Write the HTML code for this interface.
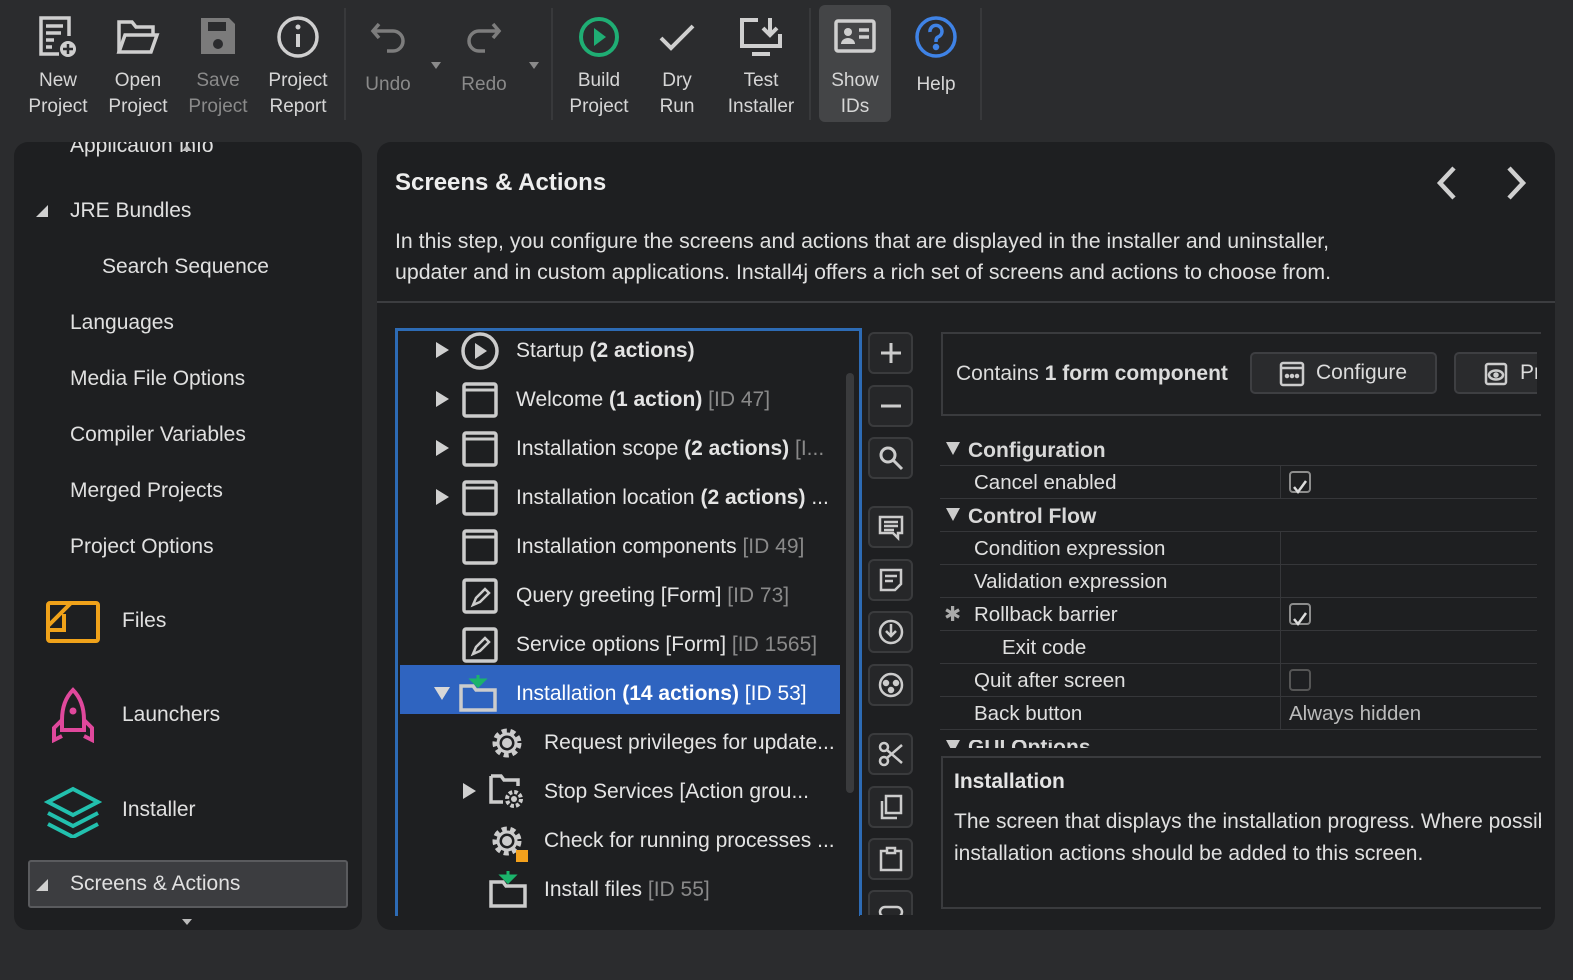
<!DOCTYPE html>
<html><head><meta charset="utf-8"><style>
*{box-sizing:border-box;margin:0;padding:0}
body{width:1573px;height:980px;background:#2b2c2e;font-family:"Liberation Sans",sans-serif;color:#dcdcdc;position:relative;overflow:hidden}
.abs{position:absolute}
.tb{position:absolute;top:0;height:122px;text-align:center;font-size:19px;line-height:26px;color:#d6d6d6}
.tb svg{display:block;margin:14px auto 8px}
.sep{position:absolute;top:8px;width:2px;height:112px;background:#38393b}
.side{left:14px;top:142px;width:348px;height:788px;background:#1e1f21;border-radius:14px;overflow:hidden}
.si{position:absolute;font-size:21px;color:#e0e0e0}
.main{left:377px;top:142px;width:1178px;height:788px;background:#1e1f21;border-radius:14px;overflow:hidden}
.tree{left:395px;top:328px;width:467px;height:588px;border:3px solid #2d6bb5;border-bottom:none;overflow:hidden}
.row{position:absolute;left:0;height:49px;width:440px;font-size:21px;line-height:49px;white-space:nowrap;color:#e4e4e4}
.row b{font-weight:bold}
.row .g{color:#8a8a8a}
.tri{position:absolute;width:0;height:0;border-top:8px solid transparent;border-bottom:8px solid transparent;border-left:13px solid #d0d0d0}
.btn{position:absolute;left:868px;width:45px;height:42px;border:2px solid #3a3b3d;border-radius:6px;background:#262729}
.btn svg{position:absolute;left:7px;top:5px}
.pr{position:absolute;left:940px;width:597px;height:33px;border-bottom:1px solid #36373a;font-size:20.5px;line-height:33px;color:#e0e0e0}
.pr .v{position:absolute;left:340px;top:0;height:33px;border-left:1px solid #36373a;width:257px;padding-left:8px;color:#cfcfcf}
.cb{position:absolute;left:8px;top:5px;width:22px;height:22px;border:2px solid #8d8d8d;border-radius:4px}
.hd{font-weight:bold;color:#d8d8d8}
</style></head><body>
<!-- toolbar -->
<div class="tb" style="left:22px;width:72px"><svg width="46" height="46" viewBox="0 0 46 46" fill="none" stroke="#cfcfcf" stroke-width="3.5"><path d="M24 40H6V4h28v18"/><path d="M11 12h17M11 19h15M11 26h8M11 33h6"/><circle cx="33" cy="35" r="8" fill="#cfcfcf" stroke="none"/><path d="M33 30v10M28 35h10" stroke="#2b2c2e" stroke-width="2.5"/></svg>New<br>Project</div>
<div class="tb" style="left:102px;width:72px"><svg width="46" height="46" viewBox="0 0 46 46" fill="none" stroke="#cfcfcf" stroke-width="3.5"><path d="M4 38V8h13l4 5h17v8"/><path d="M4 38l6-17h32l-6 17z"/></svg>Open<br>Project</div>
<div class="tb" style="left:182px;width:72px;color:#8a8a8a"><svg width="46" height="46" viewBox="0 0 46 46"><path d="M6 4h28l6 6v30H6z" fill="#7b7b7b"/><rect x="13" y="8" width="18" height="9" fill="#2b2c2e"/><circle cx="23" cy="30" r="5" fill="#2b2c2e"/></svg>Save<br>Project</div>
<div class="tb" style="left:262px;width:72px"><svg width="46" height="46" viewBox="0 0 46 46" fill="none" stroke="#cfcfcf" stroke-width="3.5"><circle cx="23" cy="23" r="19"/><path d="M23 20v13" stroke-width="4"/><circle cx="23" cy="13" r="2.5" fill="#cfcfcf" stroke="none"/></svg>Project<br>Report</div>
<div class="sep" style="left:344px"></div>
<div class="tb" style="left:355px;width:66px;color:#8a8a8a"><svg width="46" height="46" viewBox="0 0 46 46" fill="none" stroke="#7d7d7d" stroke-width="3.5"><path d="M14 10l-6 7 6 7"/><path d="M8 17h20a10 10 0 0 1 0 20h-6"/></svg><div style="margin-top:12px">Undo</div></div>
<div class="abs" style="left:431px;top:62px;border-left:5px solid transparent;border-right:5px solid transparent;border-top:7px solid #8a8a8a"></div>
<div class="tb" style="left:451px;width:66px;color:#8a8a8a"><svg width="46" height="46" viewBox="0 0 46 46" fill="none" stroke="#7d7d7d" stroke-width="3.5"><path d="M32 10l6 7-6 7"/><path d="M38 17H18a10 10 0 0 0 0 20h6"/></svg><div style="margin-top:12px">Redo</div></div>
<div class="abs" style="left:529px;top:62px;border-left:5px solid transparent;border-right:5px solid transparent;border-top:7px solid #8a8a8a"></div>
<div class="sep" style="left:551px"></div>
<div class="tb" style="left:563px;width:72px"><svg width="46" height="46" viewBox="0 0 46 46"><circle cx="23" cy="23" r="18" fill="none" stroke="#1fae74" stroke-width="4"/><path d="M18 14l12 9-12 9z" fill="#1fae74"/></svg>Build<br>Project</div>
<div class="tb" style="left:645px;width:64px"><svg width="46" height="46" viewBox="0 0 46 46" fill="none" stroke="#cfcfcf" stroke-width="4"><path d="M7 24l10 10 22-22"/></svg>Dry<br>Run</div>
<div class="tb" style="left:722px;width:78px"><svg width="46" height="46" viewBox="0 0 46 46" fill="none" stroke="#cfcfcf" stroke-width="4"><path d="M20 6H4v26h38V20"/><path d="M14 40h18"/><path d="M32 4v16M25 14l7 7 7-7"/></svg>Test<br>Installer</div>
<div class="sep" style="left:809px"></div>
<div class="abs" style="left:819px;top:5px;width:72px;height:117px;background:#444547;border-radius:6px"></div>
<div class="tb" style="left:819px;width:72px"><svg width="46" height="46" viewBox="0 0 46 46"><rect x="4" y="7" width="38" height="30" rx="2" fill="none" stroke="#cfcfcf" stroke-width="3.5"/><circle cx="16" cy="18" r="4" fill="#cfcfcf"/><path d="M9 30a7 6 0 0 1 14 0z" fill="#cfcfcf"/><path d="M27 16h10M27 23h10" stroke="#cfcfcf" stroke-width="3.5"/></svg>Show<br>IDs</div>
<div class="tb" style="left:900px;width:72px"><svg width="46" height="46" viewBox="0 0 46 46" fill="none" stroke="#3f83e6" stroke-width="3.5"><circle cx="23" cy="23" r="19"/><path d="M17 18a6 6 0 1 1 8 5c-2 1-2 3-2 5"/><circle cx="23" cy="33" r="1.5" fill="#3f83e6"/></svg><div style="margin-top:12px">Help</div></div>
<div class="sep" style="left:980px"></div>

<!-- sidebar -->
<div class="abs side">
<div class="si" style="left:56px;top:-8px">Application Info</div>
<div class="abs" style="left:168px;top:3px;border-left:5px solid transparent;border-right:5px solid transparent;border-bottom:6px solid #bbb"></div>
<div class="abs" style="left:22px;top:63px;border-left:12px solid transparent;border-bottom:12px solid #d0d0d0"></div>
<div class="si" style="left:56px;top:57px">JRE Bundles</div>
<div class="si" style="left:88px;top:113px">Search Sequence</div>
<div class="si" style="left:56px;top:169px">Languages</div>
<div class="si" style="left:56px;top:225px">Media File Options</div>
<div class="si" style="left:56px;top:281px">Compiler Variables</div>
<div class="si" style="left:56px;top:337px">Merged Projects</div>
<div class="si" style="left:56px;top:393px">Project Options</div>
<svg class="abs" style="left:32px;top:456px" width="56" height="46" viewBox="0 0 56 46" fill="none" stroke="#f0a21a" stroke-width="4"><rect x="2" y="5" width="50" height="38" rx="2"/><path d="M2 32h16V16M2 28L25 5"/></svg>
<div class="si" style="left:108px;top:467px">Files</div>
<svg class="abs" style="left:36px;top:545px" width="46" height="56" viewBox="0 0 46 56" fill="none" stroke="#e0489c" stroke-width="4"><path d="M23 3c-8 8-11 18-11 30v10h22V33C34 21 31 11 23 3z"/><path d="M12 33l-8 8v12l8-4M34 33l8 8v12l-8-4"/><circle cx="23" cy="24" r="3.5" fill="#e0489c" stroke="none"/></svg>
<div class="si" style="left:108px;top:561px">Launchers</div>
<svg class="abs" style="left:30px;top:644px" width="58" height="52" viewBox="0 0 58 52" fill="none" stroke="#22c0ae" stroke-width="4"><path d="M29 3L54 16 29 29 4 16z"/><path d="M4 27l25 13 25-13M4 38l25 13 25-13"/></svg>
<div class="si" style="left:108px;top:656px">Installer</div>
<div class="abs" style="left:14px;top:718px;width:320px;height:48px;background:#3c3d40;border:2px solid #5a5b5e;border-radius:3px"></div>
<div class="abs" style="left:22px;top:737px;border-left:12px solid transparent;border-bottom:12px solid #d0d0d0"></div>
<div class="si" style="left:56px;top:730px">Screens &amp; Actions</div>
<div class="abs" style="left:168px;top:777px;border-left:5px solid transparent;border-right:5px solid transparent;border-top:6px solid #bbb"></div>
</div>

<!-- main -->
<div class="abs main">
<div class="abs" style="left:18px;top:27px;font-size:24px;font-weight:bold;color:#eee">Screens &amp; Actions</div>
<svg class="abs" style="left:1055px;top:22px" width="30" height="40" viewBox="0 0 30 40" fill="none" stroke="#d0d0d0" stroke-width="4.5"><path d="M22 4L8 19l14 15"/></svg>
<svg class="abs" style="left:1124px;top:22px" width="30" height="40" viewBox="0 0 30 40" fill="none" stroke="#d0d0d0" stroke-width="4.5"><path d="M8 4l14 15L8 34"/></svg>
<div class="abs" style="left:18px;top:84px;font-size:21.3px;line-height:31px;color:#e0e0e0;white-space:nowrap">In this step, you configure the screens and actions that are displayed in the installer and uninstaller,<br>updater and in custom applications. Install4j offers a rich set of screens and actions to choose from.</div>
<div class="abs" style="left:0;top:159px;width:1178px;height:2px;background:#3c3d40"></div>
</div>

<!-- tree -->
<div class="abs tree">
<div class="abs" style="left:2px;top:334px;width:440px;height:49px;background:#2f64c0"></div>
<div class="abs" style="left:448px;top:42px;width:8px;height:420px;background:#3a3b3d;border-radius:4px"></div>
<div class="row" style="top:-5px"><span class="tri" style="left:38px;top:16px"></span><svg class="abs" style="left:62px;top:5px" width="40" height="40" viewBox="0 0 40 40"><circle cx="20" cy="20" r="17" fill="none" stroke="#ccc" stroke-width="3.5"/><path d="M15 12l12 8-12 8z" fill="#ccc"/></svg><span style="position:absolute;left:118px">Startup <b>(2 actions)</b></span></div>
<div class="row" style="top:44px"><span class="tri" style="left:38px;top:16px"></span><svg class="abs" style="left:64px;top:7px" width="36" height="36"><rect x="2" y="2" width="32" height="32" rx="2" fill="none" stroke="#ccc" stroke-width="3.5"/><path d="M2 8h32" stroke="#ccc" stroke-width="3"/></svg><span style="position:absolute;left:118px">Welcome <b>(1 action)</b> <span class="g">[ID 47]</span></span></div>
<div class="row" style="top:93px"><span class="tri" style="left:38px;top:16px"></span><svg class="abs" style="left:64px;top:7px" width="36" height="36"><rect x="2" y="2" width="32" height="32" rx="2" fill="none" stroke="#ccc" stroke-width="3.5"/><path d="M2 8h32" stroke="#ccc" stroke-width="3"/></svg><span style="position:absolute;left:118px">Installation scope <b>(2 actions)</b> <span class="g">[I...</span></span></div>
<div class="row" style="top:142px"><span class="tri" style="left:38px;top:16px"></span><svg class="abs" style="left:64px;top:7px" width="36" height="36"><rect x="2" y="2" width="32" height="32" rx="2" fill="none" stroke="#ccc" stroke-width="3.5"/><path d="M2 8h32" stroke="#ccc" stroke-width="3"/></svg><span style="position:absolute;left:118px">Installation location <b>(2 actions)</b> ...</span></div>
<div class="row" style="top:191px"><svg class="abs" style="left:64px;top:7px" width="36" height="36"><rect x="2" y="2" width="32" height="32" rx="2" fill="none" stroke="#ccc" stroke-width="3.5"/><path d="M2 8h32" stroke="#ccc" stroke-width="3"/></svg><span style="position:absolute;left:118px">Installation components <span class="g">[ID 49]</span></span></div>
<div class="row" style="top:240px"><svg class="abs" style="left:64px;top:7px" width="36" height="36"><rect x="2" y="2" width="32" height="32" rx="2" fill="none" stroke="#ccc" stroke-width="3.5"/><path d="M11 27l3-7 9-9 4 4-9 9z" fill="none" stroke="#ccc" stroke-width="2.5"/></svg><span style="position:absolute;left:118px">Query greeting [Form] <span class="g">[ID 73]</span></span></div>
<div class="row" style="top:289px"><svg class="abs" style="left:64px;top:7px" width="36" height="36"><rect x="2" y="2" width="32" height="32" rx="2" fill="none" stroke="#ccc" stroke-width="3.5"/><path d="M11 27l3-7 9-9 4 4-9 9z" fill="none" stroke="#ccc" stroke-width="2.5"/></svg><span style="position:absolute;left:118px">Service options [Form] <span class="g">[ID 1565]</span></span></div>
<div class="row" style="top:338px;color:#fff"><span class="tri" style="left:36px;top:18px;border-left:8px solid transparent;border-right:8px solid transparent;border-top:13px solid #d8d8d8;border-bottom:0"></span><svg class="abs" style="left:60px;top:4px" width="40" height="40"><path d="M3 13h12l3 4h19v20H3z" fill="none" stroke="#ccc" stroke-width="3.5"/><path d="M20 2v8M14 7l6 6 6-6z" fill="#1bb36b" stroke="#1bb36b" stroke-width="3"/></svg><span style="position:absolute;left:118px">Installation <b>(14 actions)</b> [ID 53]</span></div>
<div class="row" style="top:387px"><svg class="abs" style="left:90px;top:6px" width="38" height="38" viewBox="0 0 38 38"><circle cx="19" cy="19" r="12" fill="none" stroke="#ccc" stroke-width="5" stroke-dasharray="5 3.5"/><circle cx="19" cy="19" r="9" fill="none" stroke="#ccc" stroke-width="3"/><circle cx="19" cy="19" r="5" fill="#ccc"/></svg><span style="position:absolute;left:146px">Request privileges for update...</span></div>
<div class="row" style="top:436px"><span class="tri" style="left:65px;top:16px"></span><svg class="abs" style="left:90px;top:4px" width="40" height="40"><path d="M3 5h10l3 4h14v6M3 5v26h12" fill="none" stroke="#ccc" stroke-width="3.5"/><circle cx="26" cy="28" r="7" fill="none" stroke="#ccc" stroke-width="4" stroke-dasharray="3.5 2"/><circle cx="26" cy="28" r="3" fill="#ccc"/></svg><span style="position:absolute;left:146px">Stop Services [Action grou...</span></div>
<div class="row" style="top:485px"><svg class="abs" style="left:90px;top:6px" width="42" height="40" viewBox="0 0 42 40"><circle cx="19" cy="19" r="12" fill="none" stroke="#ccc" stroke-width="5" stroke-dasharray="5 3.5"/><circle cx="19" cy="19" r="9" fill="none" stroke="#ccc" stroke-width="3"/><circle cx="19" cy="19" r="5" fill="#ccc"/><rect x="28" y="28" width="12" height="12" fill="#f4a11c"/></svg><span style="position:absolute;left:146px">Check for running processes ...</span></div>
<div class="row" style="top:534px"><svg class="abs" style="left:90px;top:4px" width="40" height="40"><path d="M3 13h12l3 4h19v20H3z" fill="none" stroke="#ccc" stroke-width="3.5"/><path d="M20 2v8M14 7l6 6 6-6z" fill="#1bb36b" stroke="#1bb36b" stroke-width="3"/></svg><span style="position:absolute;left:146px">Install files <span class="g">[ID 55]</span></span></div>
</div>

<!-- tool buttons -->
<div class="btn" style="top:332px"><svg width="28" height="28" fill="none" stroke="#ccc" stroke-width="3"><path d="M14 4v20M4 14h20"/></svg></div>
<div class="btn" style="top:385px"><svg width="28" height="28" fill="none" stroke="#ccc" stroke-width="3"><path d="M4 14h20"/></svg></div>
<div class="btn" style="top:437px"><svg width="28" height="28" fill="none" stroke="#ccc" stroke-width="3"><circle cx="11" cy="11" r="7"/><path d="M16 16l9 9"/></svg></div>
<div class="btn" style="top:506px"><svg width="28" height="28" fill="none" stroke="#ccc" stroke-width="2.5"><path d="M3 4h22v16h-4v5l-5-5H3z"/><path d="M7 9h14M7 13h14M7 17h10"/></svg></div>
<div class="btn" style="top:559px"><svg width="28" height="28" fill="none" stroke="#ccc" stroke-width="2.5"><path d="M4 4h20v14l-6 6H4z"/><path d="M8 10h12M8 15h8"/></svg></div>
<div class="btn" style="top:611px"><svg width="28" height="28" fill="none" stroke="#ccc" stroke-width="2.5"><circle cx="14" cy="14" r="11"/><path d="M14 6v12M9 13l5 5 5-5"/></svg></div>
<div class="btn" style="top:664px"><svg width="28" height="28" fill="none" stroke="#ccc" stroke-width="2.5"><circle cx="14" cy="14" r="11"/><circle cx="9" cy="12" r="2" fill="#ccc"/><circle cx="19" cy="12" r="2" fill="#ccc"/><circle cx="14" cy="19" r="2" fill="#ccc"/></svg></div>
<div class="btn" style="top:733px"><svg width="28" height="28" fill="none" stroke="#ccc" stroke-width="2.5"><circle cx="7" cy="7" r="4"/><circle cx="7" cy="21" r="4"/><path d="M10 10l15 13M10 18L25 5"/></svg></div>
<div class="btn" style="top:786px"><svg width="28" height="28" fill="none" stroke="#ccc" stroke-width="2.5"><rect x="9" y="3" width="15" height="17"/><path d="M5 8v17h15"/></svg></div>
<div class="btn" style="top:838px"><svg width="28" height="28" fill="none" stroke="#ccc" stroke-width="2.5"><rect x="4" y="6" width="20" height="19"/><rect x="10" y="3" width="8" height="5" fill="#262729"/></svg></div>
<div class="btn" style="top:890px;height:40px"><svg width="28" height="28" fill="none" stroke="#ccc" stroke-width="2.5"><rect x="3" y="10" width="22" height="10" rx="5"/></svg></div>
<div class="abs" style="left:860px;top:915px;width:60px;height:15px;background:#1e1f21"></div>

<!-- right props -->
<div class="abs" style="left:941px;top:332px;width:600px;height:84px;border:2px solid #3a3b3e;border-right:none"></div>
<div class="abs" style="left:956px;top:362px;font-size:21px">Contains <b>1 form component</b></div>
<div class="abs" style="left:1250px;top:352px;width:187px;height:42px;border:2px solid #3e3f42;border-radius:5px;background:#2a2b2d;font-size:21px;line-height:38px;padding-left:64px">Configure</div>
<svg class="abs" style="left:1279px;top:361px" width="26" height="26" fill="none" stroke="#ccc" stroke-width="2.5"><rect x="2" y="2" width="22" height="22" rx="2"/><path d="M2 7h22"/><circle cx="8" cy="15" r="1" fill="#ccc"/><circle cx="13" cy="15" r="1" fill="#ccc"/><circle cx="18" cy="15" r="1" fill="#ccc"/></svg>
<div class="abs" style="left:1454px;top:352px;width:83px;height:42px;border:2px solid #3e3f42;border-right:none;border-radius:5px 0 0 5px;background:#2a2b2d;font-size:21px;line-height:38px;padding-left:64px;overflow:hidden">Pr</div>
<svg class="abs" style="left:1484px;top:362px" width="24" height="24" fill="none" stroke="#ccc" stroke-width="2.5"><rect x="2" y="2" width="20" height="20" rx="2"/><ellipse cx="12" cy="13" rx="7" ry="4.5"/><circle cx="12" cy="13" r="1.5" fill="#ccc"/></svg>

<div class="abs" style="left:946px;top:442px;border-left:7px solid transparent;border-right:7px solid transparent;border-top:13px solid #ccc"></div>
<div class="abs hd" style="left:968px;top:439px;font-size:21px">Configuration</div>
<div class="abs" style="left:940px;top:465px;width:597px;height:1px;background:#36373a"></div>
<div class="pr" style="top:466px"><span style="padding-left:34px">Cancel enabled</span><div class="v"><div class="cb"><svg width="18" height="18" fill="none" stroke="#ddd" stroke-width="2.5"><path d="M3 9l4 5 8-11"/></svg></div></div></div>
<div class="abs" style="left:946px;top:508px;border-left:7px solid transparent;border-right:7px solid transparent;border-top:13px solid #ccc"></div>
<div class="abs hd" style="left:968px;top:505px;font-size:21px">Control Flow</div>
<div class="abs" style="left:940px;top:531px;width:597px;height:1px;background:#36373a"></div>
<div class="pr" style="top:532px"><span style="padding-left:34px">Condition expression</span><div class="v"></div></div>
<div class="pr" style="top:565px"><span style="padding-left:34px">Validation expression</span><div class="v"></div></div>
<div class="pr" style="top:598px"><span style="padding-left:4px;color:#aaa">✱</span><span style="position:absolute;left:34px">Rollback barrier</span><div class="v"><div class="cb"><svg width="18" height="18" fill="none" stroke="#ddd" stroke-width="2.5"><path d="M3 9l4 5 8-11"/></svg></div></div></div>
<div class="pr" style="top:631px"><span style="padding-left:62px">Exit code</span><div class="v"></div></div>
<div class="pr" style="top:664px"><span style="padding-left:34px">Quit after screen</span><div class="v"><div class="cb" style="border-color:#555"></div></div></div>
<div class="pr" style="top:697px"><span style="padding-left:34px">Back button</span><div class="v" style="color:#bbb">Always hidden</div></div>
<div class="abs" style="left:946px;top:740px;width:200px;height:8px;overflow:hidden"><div style="border-left:7px solid transparent;border-right:7px solid transparent;border-top:13px solid #ccc;position:absolute"></div><div class="hd" style="position:absolute;left:22px;top:-4px;font-size:21px">GUI Options</div></div>
<div class="abs" style="left:941px;top:756px;width:600px;height:153px;border:2px solid #3a3b3e;border-right:none;overflow:hidden">
<div class="abs" style="left:11px;top:12px;font-size:21px;font-weight:bold;color:#e4e4e4">Installation</div>
<div class="abs" style="left:11px;top:48px;font-size:21px;line-height:32px;white-space:nowrap;color:#e0e0e0">The screen that displays the installation progress. Where possible,<br>installation actions should be added to this screen.</div>
</div>
</body></html>
